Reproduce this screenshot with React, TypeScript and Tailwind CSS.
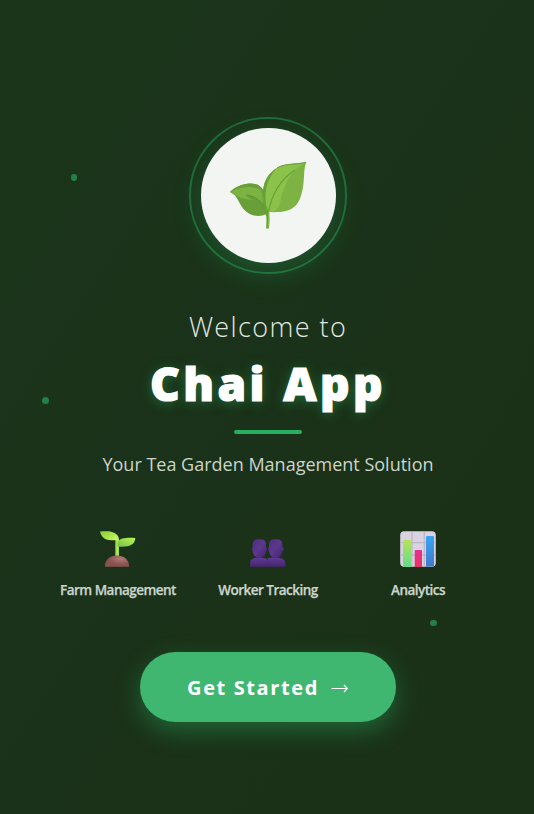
import React from "react";

function LeafLogo() {
  return (
    <svg width="80" height="72" viewBox="0 0 80 72" fill="none">
      <path d="M1 32C8 25 20 21 29 25C35 28 39 38 39.5 53C31 58 20 57 13 47C9 41 8 35 1 32Z" fill="#689f38" />
      <path d="M1 32C10 24 22 22 29 26C33 29 34 37 34 45C30 39 25 36 17 35C19 38 22 39 25 40C16 40 8 37 1 32Z" fill="#7cb342" />
      <path d="M1 32C8 25 20 21 29 25C32 27 34 29 34 31C25 25 13 26 1 32Z" fill="#689f38" />
      <path d="M17 35C27 36 34 42 39 53" stroke="#5b9432" strokeWidth="1" />
      <path d="M38.5 52C30 33 34 16 48 8C56 3 67 4 77.300 2C74 10 76 21 73 32C69 50 59 53 38.500 52Z" fill="#7cb342" />
      <path d="M38.500 52C30 33 34 16 48 8C56 3 67 4 77.300 2C62 10 58 21 54 31C51 38 53 44 46 51Z" fill="#8bc34a" />
      <path d="M38.500 52C30 34 34 17 48 8C37 19 34 34 38.500 52Z" fill="#689f38" />
      <path d="M77 2.500C66 5 56 3 48 8" stroke="#689f38" strokeWidth="1" />
      <path d="M39.300 53C43 32 52 19 66 10" stroke="#689f38" strokeWidth="1.200" />
      <path d="M35.500 46C40 54 39 61 38.600 68.500" stroke="#689f38" strokeWidth="3" />
      <path d="M40 51C40 56 39.600 63 39.200 68" stroke="#8bc34a" strokeWidth="1" />
    </svg>
  );
}

function SproutIcon() {
  return (
    <svg width="36" height="36" viewBox="0 0 36 36">
      <defs>
        <linearGradient id="leafL" x1="0" y1="0" x2="1" y2="0.6"><stop stopColor="#88ca35" /><stop offset="1" stopColor="#c2f65c" /></linearGradient>
        <linearGradient id="leafR" x1="0" y1="1" x2="1" y2="0"><stop stopColor="#78bd48" /><stop offset="1" stopColor="#b7f653" /></linearGradient>
        <radialGradient id="soil" cx="0.65" cy="0.3"><stop stopColor="#b47b74" /><stop offset="1" stopColor="#875250" /></radialGradient>
      </defs>
      <path d="M15.300 9H19V27H15.300Z" fill="#9bdc48" />
      <path d="M17.300 9V26" stroke="#b8ef5d" />
      <path d="M0 .500C7-.200 19-.500 19 9.300H12C4 9.500 1 5 0 .500Z" fill="url(#leafL)" />
      <path d="M35.300 7C35 14 29 16.500 17.500 15.500V12C18 7 27 6.500 35.300 7Z" fill="url(#leafR)" />
      <path d="M5 35.700C4.500 29 10 24.600 17 24.600S29.500 29 29 35.700Z" fill="url(#soil)" />
    </svg>
  );
}

function PeopleIcon() {
  return (
    <svg width="36" height="28" viewBox="0 0 36 28">
      <defs>
        <linearGradient id="head" x1="0" y1="0" x2="1" y2="1"><stop stopColor="#502e80" /><stop offset=".5" stopColor="#5c378f" /><stop offset="1" stopColor="#43246b" /></linearGradient>
        <linearGradient id="body" x1="0" y1="0" x2="0" y2="1"><stop stopColor="#603a96" /><stop offset="1" stopColor="#46256f" /></linearGradient>
      </defs>
      <ellipse cx="2.900" cy="10" rx="1.200" ry="2" fill="#4c2b79" />
      <ellipse cx="15.800" cy="10" rx="1.200" ry="2" fill="#4c2b79" />
      <path d="M0 27.700V24C0 20 4 18.500 9.500 18.500C15 18.500 19 20 19 24V27.700Z" fill="url(#body)" />
      <path d="M19 27.700V24C18.500 20.500 17.800 20 17 19.500C19 18.800 22 18.500 25.600 18.500C31 18.500 35.300 20 35.300 24V27.700Z" fill="url(#body)" />
      <ellipse cx="19.200" cy="10" rx="1.200" ry="2" fill="#4c2b79" />
      <ellipse cx="32.300" cy="10" rx="1.200" ry="2" fill="#5c378f" />
      <path d="M2.700 5.500C2.700 1.500 5 .300 9.400 .300C13.800 .300 16 1.500 16 5.500V11.500C16 16 13.500 18.700 9.400 18.700C5.300 18.700 2.700 16 2.700 11.500Z" fill="url(#head)" />
      <path d="M19 5.500C19 1.500 21.300 .300 25.700 .300C30.100 .300 32.300 1.500 32.300 5.500V11.500C32.300 16 29.800 18.700 25.700 18.700C21.600 18.700 19 16 19 11.500Z" fill="url(#head)" />
    </svg>
  );
}

function ChartIcon() {
  return (
    <svg width="36" height="36" viewBox="0 0 36 36">
      <defs>
        <linearGradient id="barG" x1="0" y1="0" x2="0" y2="1"><stop stopColor="#b5e35b" /><stop offset="1" stopColor="#62dc8b" /></linearGradient>
        <linearGradient id="barR" x1="0" y1="0" x2="0" y2="1"><stop stopColor="#e52e8f" /><stop offset="1" stopColor="#e63560" /></linearGradient>
        <linearGradient id="barB" x1="0" y1="0" x2="0" y2="1"><stop stopColor="#38a4f5" /><stop offset="1" stopColor="#4179cb" /></linearGradient>
      </defs>
      <rect x=".2" y=".2" width="35.600" height="35.600" rx="4" fill="#d9d3e1" />
      <path d="M12 .500V35.500M24.300 .500V35.500M.500 11.700H35.500M.500 24H35.500" stroke="#bdb5c7" strokeWidth="1.300" />
      <path d="M3 36V10Q3 9 4 9H10.300Q11.300 9 11.300 10V36Z" fill="url(#barG)" />
      <path d="M14.700 36V20Q14.700 19 15.700 19H21Q22 19 22 20V36Z" fill="url(#barR)" />
      <path d="M26 35.800V6Q26 5 27 5H33Q34 5 34 6V35.300Z" fill="url(#barB)" />
    </svg>
  );
}

const features = [
  { label: "Farm Management", icon: <SproutIcon /> },
  { label: "Worker Tracking", icon: <PeopleIcon /> },
  { label: "Analytics", icon: <ChartIcon /> },
];

export default function App() {
  return (
    <main className="relative flex h-[814px] w-[534px] flex-col items-center overflow-hidden bg-linear-to-br from-[#1b351b] via-[#1a3219] to-[#1a3118] pl-[2px] pt-[117px] font-['Open_Sans','Noto_Sans',sans-serif]">
      <span className="absolute left-[71px] top-[174px] h-[7px] w-[6px] rounded-full bg-[#218148]" />
      <span className="absolute left-[42px] top-[397px] size-[7px] rounded-full bg-[#218148]" />
      <span className="absolute left-[430px] top-[620px] h-[6px] w-[7px] rounded-full bg-[#218148]" />

      <div className="flex h-[157px] w-[158px] shrink-0 items-center justify-center rounded-full border-2 border-[#1f6b39] pl-px">
        <div className="flex size-[135px] items-center justify-center rounded-full bg-[#f3f5f3] shadow-[0_9px_28px_rgba(39,174,96,0.3)]">
          <LeafLogo />
        </div>
      </div>

      <h2 className="mt-[33px] h-10 whitespace-nowrap text-[27px] leading-10 font-light tracking-[1.4px] text-[#e1e7e1]">Welcome to</h2>
      <h1 className="mt-[3px] h-[66px] whitespace-nowrap text-[46px] leading-[66px] font-extrabold tracking-[3.4px] text-white [-webkit-text-stroke:1.2px_white] [text-shadow:0_2px_12px_rgba(39,174,96,0.5)]">Chai App</h1>
      <div className="mt-[14px] h-1 w-[68px] shrink-0 rounded-full bg-[#27ae60]" />
      <p className="mt-[17px] h-[26px] whitespace-nowrap text-[18px] leading-[26px] text-[#ccd5cc]">Your Tea Garden Management Solution</p>

      <section className="mt-[54px] grid h-[72px] w-[450px] grid-cols-3">
        {features.map((f) => (
          <div key={f.label} className="flex flex-col items-center">
            <div className="flex h-9 items-end">{f.icon}</div>
            <span className="mt-[13px] whitespace-nowrap text-[13.5px] leading-5 font-semibold tracking-[-0.53px] text-[#ccd5cc] [-webkit-text-stroke:0.25px_#ccd5cc]">{f.label}</span>
          </div>
        ))}
      </section>

      <button className="mt-[49px] flex h-[70px] w-[256px] shrink-0 items-center justify-center gap-[12px] rounded-full bg-[#3fb771] pt-[2px] text-[20px] font-bold text-white shadow-[0_9px_24px_rgba(39,174,96,0.42)]">
        <span className="whitespace-nowrap tracking-[1.6px]">Get Started</span>
        <svg width="18" height="12" viewBox="0 0 18 12" fill="none" stroke="white" strokeWidth="1.200"><path d="M.500 6.500H16.500M13 3L16.300 6.500L13 10" /></svg>
      </button>
    </main>
  );
}
